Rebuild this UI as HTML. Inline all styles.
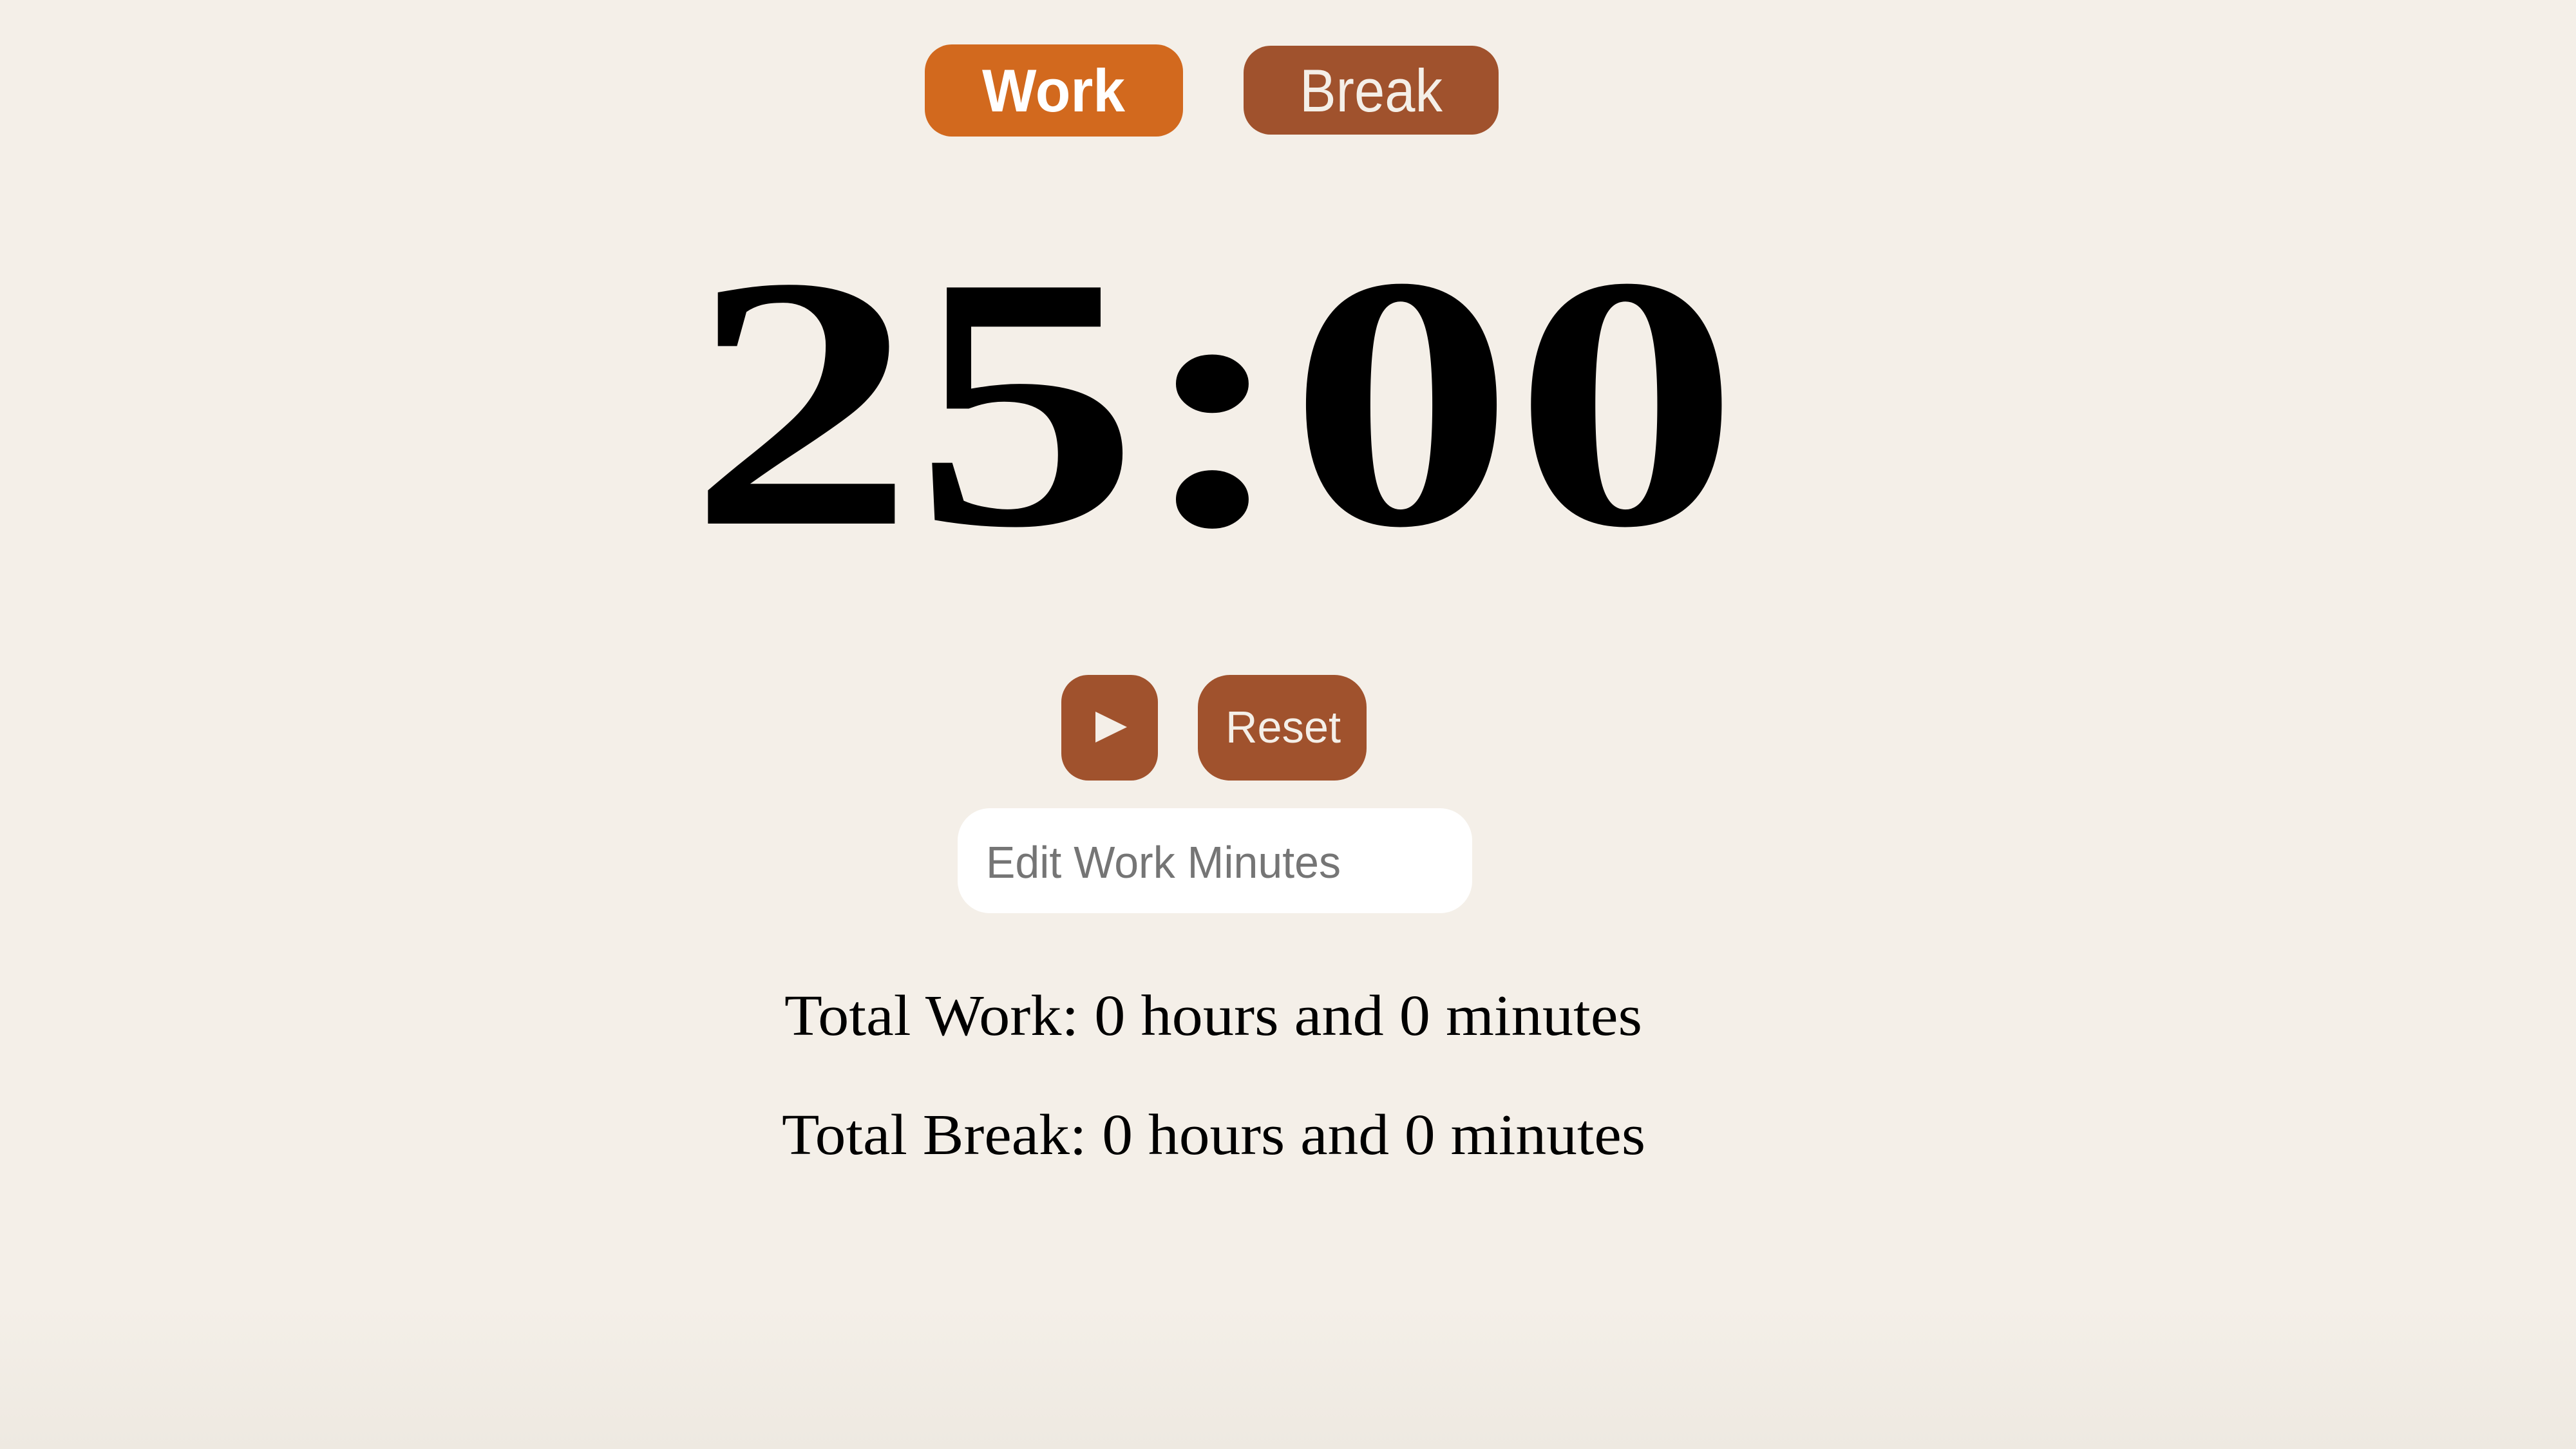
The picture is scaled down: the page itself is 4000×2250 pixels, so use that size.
<!DOCTYPE html>
<html><head><meta charset="utf-8"><style>
html,body{margin:0;padding:0;background:#F4EFE8;width:4000px;height:2250px;overflow:hidden}
svg{display:block}
</style></head><body>
<svg width="4000" height="2250" viewBox="0 0 4000 2250" xmlns="http://www.w3.org/2000/svg">
<defs><linearGradient id="bg" x1="0" y1="0" x2="0" y2="1">
<stop offset="0.9" stop-color="#F4EFE8"/><stop offset="1" stop-color="#EEE9E1"/></linearGradient></defs>
<rect width="4000" height="2250" fill="url(#bg)"/>
<rect x="1436" y="69" width="401" height="143" rx="42" fill="#D2691E"/>
<text x="1525" y="173" textLength="222" lengthAdjust="spacingAndGlyphs" font-family="Liberation Sans, Arial, sans-serif" font-weight="bold" font-size="94" fill="#fff">Work</text>
<rect x="1931" y="71" width="396" height="138" rx="42" fill="#A0522D"/>
<text x="2018" y="173" textLength="222" lengthAdjust="spacingAndGlyphs" font-family="Liberation Sans, Arial, sans-serif" font-size="94" fill="#F4EFE8">Break</text>
<text x="1070" y="813" textLength="1630" lengthAdjust="spacingAndGlyphs" font-family="Liberation Serif, serif" font-weight="bold" font-size="560" fill="#000">25:00</text>
<rect x="1648" y="1048" width="150" height="164" rx="42" fill="#A0522D"/>
<path d="M1701 1105 L1750 1129 L1701 1153 Z" fill="#F4EFE8"/>
<rect x="1860" y="1048" width="262" height="164" rx="50" fill="#A0522D"/>
<text x="1903" y="1153" textLength="179" lengthAdjust="spacingAndGlyphs" font-family="Liberation Sans, Arial, sans-serif" font-size="70" fill="#F4EFE8">Reset</text>
<rect x="1487" y="1255" width="799" height="163" rx="50" fill="#fff"/>
<text x="1531" y="1363" textLength="551" lengthAdjust="spacingAndGlyphs" font-family="Liberation Sans, Arial, sans-serif" font-size="70" fill="#757575">Edit Work Minutes</text>
<text x="1218" y="1607" textLength="1332" lengthAdjust="spacingAndGlyphs" font-family="Liberation Serif, serif" font-size="90" fill="#000">Total Work: 0 hours and 0 minutes</text>
<text x="1214" y="1792" textLength="1341" lengthAdjust="spacingAndGlyphs" font-family="Liberation Serif, serif" font-size="90" fill="#000">Total Break: 0 hours and 0 minutes</text>
</svg>
</body></html>
